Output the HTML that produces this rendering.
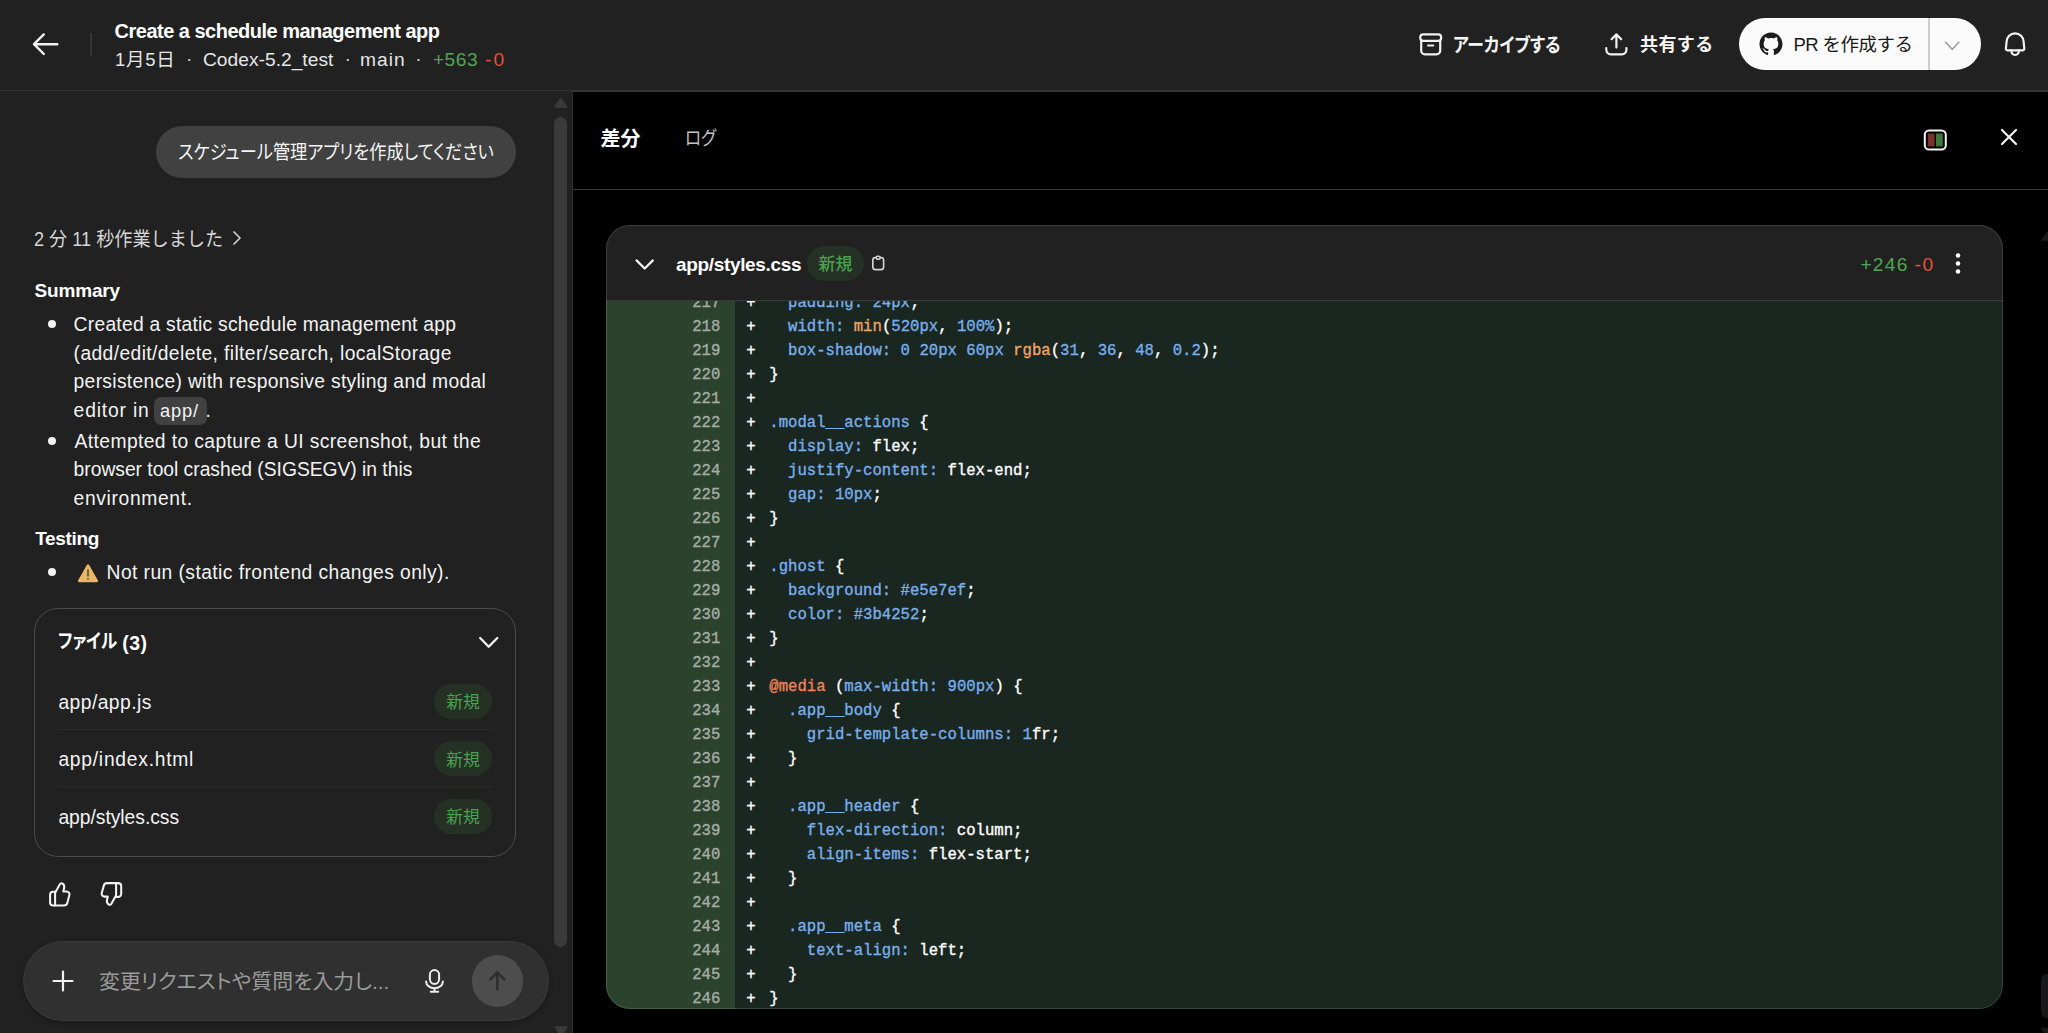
<!DOCTYPE html>
<html lang="ja">
<head>
<meta charset="utf-8">
<title>Create a schedule management app</title>
<style>
*{box-sizing:border-box;margin:0;padding:0}
html,body{width:2048px;height:1033px;overflow:hidden;background:#212121}
body{position:relative;font-family:"Liberation Sans","Noto Sans CJK JP",sans-serif;color:#fff;font-size:19px;-webkit-font-smoothing:antialiased}
.abs{position:absolute}
svg{display:block;overflow:visible}
.t{position:absolute;white-space:nowrap;line-height:1}
.b{font-weight:700}
.green{color:#4fa653}
.red{color:#e2533a}

/* header */
#hdr{position:absolute;left:0;top:0;width:2048px;height:92px;background:#212121;border-bottom:2px solid #343434}
#sep{position:absolute;left:90px;top:33px;width:2px;height:23px;background:#363636}

/* left panel */
#left{position:absolute;left:0;top:91px;width:572px;height:942px;background:#212121}
#vline{position:absolute;left:571.600px;top:92px;width:1.400px;height:941px;background:#2c2c2c}
#bubble{position:absolute;left:156px;top:126px;width:360px;height:52px;border-radius:26px;background:#414141}
.li{position:absolute;white-space:nowrap;line-height:1;font-size:19.3px;color:#f3f3f3}
.dot{position:absolute;left:47.600px;width:8px;height:8px;border-radius:50%;background:#f3f3f3}
#files{position:absolute;left:34px;top:608px;width:482px;height:249px;border:1px solid #4b4b4b;border-radius:24px}
.frow{position:absolute;font-size:19.3px;white-space:nowrap;line-height:1;color:#f3f3f3}
.fsep{position:absolute;left:58px;width:434px;height:1px;background:#2c2c2c}
.badge{position:absolute;width:57.500px;height:35px;border-radius:17.500px;background:#263126;color:#49a24e;font-size:16.800px;font-weight:400;line-height:35px;padding-top:1.800px;text-align:center}
#inp{position:absolute;left:23px;top:941px;width:526px;height:80px;border-radius:40px;background:#303030;box-shadow:0 2px 5px rgba(0,0,0,.22),inset 0 0 0 1px rgba(255,255,255,.05)}
#send{position:absolute;left:471.600px;top:954.900px;width:51.600px;height:51.800px;border-radius:50%;background:#4d4d4d}
#sbLt{position:absolute;left:554.400px;top:117px;width:12.900px;height:829.500px;border-radius:6.450px;background:#3a3a3a}

/* right panel */
#right{position:absolute;left:573px;top:92px;width:1475px;height:941px;background:#000}
#tabline{position:absolute;left:573px;top:189px;width:1475px;height:1px;background:#373737}
#card{position:absolute;left:606px;top:225px;width:1397px;height:784px;border-radius:24px;overflow:hidden;background:#1a2620}
#cardb{position:absolute;left:606px;top:225px;width:1397px;height:784px;border-radius:24px;border:1px solid rgba(255,255,255,.13);pointer-events:none}
#chead{position:absolute;left:0;top:0;width:1397px;height:76px;background:#212121;border-bottom:1px solid #3a3a3a}
#gutter{position:absolute;left:0;top:76px;width:128.600px;height:710px;background:#2b432d}
#code{position:absolute;left:1px;top:76px;width:1395px;height:710px;overflow:hidden;font-family:"Liberation Mono",monospace;font-size:15.630px;-webkit-text-stroke-width:0.350px}
.ln{position:absolute;left:0;width:113.300px;text-align:right;color:#a5ada6;height:24px;line-height:24px;white-space:pre}
.pl{position:absolute;left:139.300px;height:24px;line-height:24px;color:#fff;white-space:pre}
.cl{position:absolute;left:162.300px;height:24px;line-height:24px;color:#fff;white-space:pre}
.p{color:#78afec}
.f{color:#f0a565}
.k{color:#ee8159}
</style>
</head>
<body>
<div id="hdr"></div>
<div id="left"></div>
<div id="vline"></div>
<div id="right"></div>
<div id="tabline"></div>
<!--HEADER-->
<svg class="abs" id="ic-back" style="left:32px;top:32px" width="28" height="24" viewBox="0 0 28 24" fill="none" stroke="#f2f2f2" stroke-width="2.400" stroke-linecap="round" stroke-linejoin="round"><path d="M25.300 12.200H2M11.800 2.400L2 12.200l9.800 9.800"/></svg>
<div id="sep"></div>
<div class="t b" id="title" style="left:114.6px;top:20.7px;font-size:20px;color:#fff;letter-spacing:-0.510px">Create a schedule management app</div>
<div class="t" id="s1" style="left:115.0px;top:51.4px;font-size:18.5px;color:#e6e6e6;letter-spacing:0.733px">1月5日</div>
<div class="t" id="s2" style="left:203.0px;top:50.4px;font-size:19.2px;color:#e6e6e6;letter-spacing:0.015px">Codex-5.2_test</div>
<div class="t" id="s3" style="left:360.0px;top:50.4px;font-size:19.2px;color:#e6e6e6;letter-spacing:1.000px">main</div>
<div class="t green" id="s4" style="left:432.9px;top:50.4px;font-size:19.2px;letter-spacing:0.500px">+563</div>
<div class="t red" id="s5" style="left:485.0px;top:50.4px;font-size:19.2px;letter-spacing:2.200px">-0</div>
<div class="t" id="d1" style="left:186px;top:49px;font-size:19.2px;color:#d0d0d0">·</div>
<div class="t" id="d2" style="left:344.5px;top:49px;font-size:19.2px;color:#d0d0d0">·</div>
<div class="t" id="d3" style="left:415.3px;top:49px;font-size:19.2px;color:#d0d0d0">·</div>

<svg class="abs" id="ic-arch" style="left:1419px;top:33px" width="24" height="24" viewBox="0 0 24 24" fill="none" stroke="#f2f2f2" stroke-width="2.200" stroke-linecap="round" stroke-linejoin="round"><rect x="1.300" y="1.300" width="20.800" height="6.600" rx="2.800"/><path d="M2.200 7.900v9.600a3.800 3.800 0 0 0 3.800 3.800h11.400a3.800 3.800 0 0 0 3.800-3.800V7.900"/><path d="M9.100 12.500h5.100"/></svg>
<div class="t b" id="arch" style="left:1453.2px;top:35.5px;font-size:19.5px;color:#f4f4f4;font-feature-settings:'palt';transform:scaleX(0.8614);transform-origin:0 0">アーカイブする</div>
<svg class="abs" id="ic-share" style="left:1605px;top:32px" width="24" height="25" viewBox="0 0 24 25" fill="none" stroke="#f2f2f2" stroke-width="2.200" stroke-linecap="round" stroke-linejoin="round"><path d="M11.400 15.500V2.400M6.600 7.200l4.800-4.800 4.800 4.800"/><path d="M1.300 16v1.800a4.500 4.500 0 0 0 4.500 4.500h11.100a4.500 4.500 0 0 0 4.500-4.500V16"/></svg>
<div class="t b" id="share" style="left:1640.0px;top:36.0px;font-size:18px;color:#f4f4f4;letter-spacing:0.400px">共有する</div>

<div class="abs" id="prbtn" style="left:1739px;top:18px;width:242px;height:52px;border-radius:26px;background:#fafafa"></div>
<div class="abs" style="left:1928.300px;top:18px;width:1.300px;height:52px;background:#cdcdcd"></div>
<svg class="abs" id="ic-gh" style="left:1759px;top:32px" width="24" height="24" viewBox="0 0 24 24"><path fill="#1c1c1c" d="M12 .5C5.65.5.5 5.65.5 12c0 5.080 3.290 9.390 7.860 10.910.570.110.790-.250.790-.550 0-.270-.010-1.170-.020-2.120-3.200.700-3.870-1.360-3.870-1.360-.520-1.330-1.280-1.680-1.280-1.680-1.040-.710.080-.700.080-.700 1.150.080 1.760 1.190 1.760 1.190 1.030 1.760 2.690 1.250 3.350.950.100-.740.400-1.250.730-1.540-2.550-.290-5.240-1.280-5.240-5.680 0-1.260.450-2.280 1.180-3.090-.120-.290-.510-1.460.110-3.040 0 0 .960-.310 3.160 1.180A10.980 10.980 0 0 1 12 6.060c.980 0 1.960.130 2.880.390 2.190-1.490 3.160-1.180 3.160-1.180.630 1.580.230 2.750.110 3.040.740.810 1.180 1.830 1.180 3.090 0 4.420-2.690 5.390-5.250 5.670.410.360.780 1.060.780 2.140 0 1.540-.010 2.790-.010 3.170 0 .310.210.670.800.550C20.210 21.390 23.500 17.080 23.500 12 23.500 5.650 18.350.5 12 .5z"/></svg>
<div class="t" id="prtxt" style="left:1793.4px;top:36.0px;font-size:18.5px;color:#1a1a1a;letter-spacing:-0.541px">PR を作成する</div>
<svg class="abs" id="ic-prchev" style="left:1943px;top:40px" width="18" height="12" viewBox="0 0 18 12" fill="none" stroke="#9c9c9c" stroke-width="1.650" stroke-linecap="round" stroke-linejoin="round"><path d="M2.600 2.300l6.600 7 6.600-7"/></svg>
<svg class="abs" id="ic-bell" style="left:2003px;top:31px" width="25" height="27" viewBox="0 0 25 27" fill="none" stroke="#f2f2f2" stroke-width="2.200" stroke-linecap="round" stroke-linejoin="round"><path d="M12.100 2.300C7.200 2.300 3.900 6 3.600 10.500L2.900 17.500C2.800 18.500 3.500 19.300 4.500 19.300H19.700C20.700 19.300 21.400 18.500 21.300 17.500L20.600 10.500C20.300 6 17 2.300 12.100 2.300Z"/><path d="M8.200 19.300C8.400 22.300 10 24 12.100 24C14.200 24 15.800 22.300 16 19.300"/></svg>
<!--LEFT-->
<div id="sbLt"></div>
<svg class="abs" style="left:554px;top:97px" width="14" height="11" viewBox="0 0 14 11"><path d="M6.950 1.800L12.500 9.700H1.400z" fill="#3a3a3a" stroke="#3a3a3a" stroke-width="2" stroke-linejoin="round"/></svg>
<svg class="abs" style="left:554px;top:1025px" width="14" height="8" viewBox="0 0 14 8"><path d="M1.400 2.300H12.500L6.950 10.200z" fill="#3a3a3a" stroke="#3a3a3a" stroke-width="2" stroke-linejoin="round"/></svg>

<div id="bubble"></div>
<div class="t" id="btxt" style="left:177.6px;top:142.8px;font-size:19.5px;color:#f4f4f4;font-feature-settings:'palt';transform:scaleX(0.8832);transform-origin:0 0">スケジュール管理アプリを作成してください</div>

<div class="t" id="worked" style="left:33.8px;top:229.6px;font-size:19.800px;color:#d6d6d6;transform:scaleX(0.9168);transform-origin:0 0">2 分 11 秒作業しました</div>
<svg class="abs" style="left:232px;top:230px" width="10" height="16" viewBox="0 0 10 16" fill="none" stroke="#cfcfcf" stroke-width="1.700" stroke-linecap="round" stroke-linejoin="round"><path d="M2 2l6 6-6 6"/></svg>

<div class="t b" id="h-sum" style="left:34.4px;top:280.8px;font-size:19px;letter-spacing:-0.134px">Summary</div>
<div class="dot" style="top:320.300px"></div>
<div class="li" id="l1" style="left:73.6px;top:315.4px;letter-spacing:0.240px">Created a static schedule management app</div>
<div class="li" id="l2" style="left:73.6px;top:343.8px;letter-spacing:0.378px">(add/edit/delete, filter/search, localStorage</div>
<div class="li" id="l3" style="left:73.6px;top:372.3px;letter-spacing:0.301px">persistence) with responsive styling and modal</div>
<div class="li" id="l4" style="left:73.6px;top:400.7px;letter-spacing:0.822px">editor in</div>
<div class="abs" id="codechip" style="left:154px;top:396.700px;width:52.700px;height:28.100px;border-radius:7px;background:#414141"></div>
<div class="t" id="chiptxt" style="left:160.0px;top:402.0px;font-size:18.300px;color:#f3f3f3;letter-spacing:0.833px">app/</div>
<div class="li" id="l4b" style="left:205.4px;top:400.7px">.</div>
<div class="dot" style="top:436.800px"></div>
<div class="li" id="l5" style="left:74.6px;top:431.9px;letter-spacing:0.386px">Attempted to capture a UI screenshot, but the</div>
<div class="li" id="l6" style="left:73.6px;top:460.3px;letter-spacing:-0.027px">browser tool crashed (SIGSEGV) in this</div>
<div class="li" id="l7" style="left:73.6px;top:488.8px;letter-spacing:0.636px">environment.</div>

<div class="t b" id="h-test" style="left:35.2px;top:528.9px;font-size:19px;letter-spacing:-0.333px">Testing</div>
<div class="dot" style="top:568.100px"></div>
<svg class="abs" id="ic-warn" style="left:77px;top:563px" width="22" height="20" viewBox="0 0 22 20"><path d="M11 1.200c.500 0 .900.250 1.150.700l8.700 15.400c.500.900-.100 2-1.150 2H2.300c-1.050 0-1.650-1.100-1.150-2L9.850 1.900c.250-.450.650-.700 1.150-.700z" fill="#ecb663"/><path d="M11 6.500v7" stroke="#5c6150" stroke-width="1.900" stroke-linecap="butt"/><circle cx="11" cy="15.900" r="1.050" fill="#6a6a58"/></svg>
<div class="li" id="l8" style="left:106.6px;top:563.4px;letter-spacing:0.417px">Not run (static frontend changes only).</div>

<div id="files"></div>
<div class="t b" id="h-files" style="left:57.5px;top:632.0px;font-size:19.5px;font-feature-settings:'palt';transform:scaleX(0.85);transform-origin:0 0">ファイル</div>
<div class="t b" id="h-files2" style="left:122.2px;top:634.1px;font-size:19.5px;letter-spacing:0.525px">(3)</div>
<svg class="abs" style="left:479px;top:636px" width="19" height="12" viewBox="0 0 19 12" fill="none" stroke="#f2f2f2" stroke-width="2.300" stroke-linecap="round" stroke-linejoin="round"><path d="M1.200 2L9.700 10.700L18.300 2"/></svg>
<div class="frow" id="f1" style="left:58.4px;top:692.5px;letter-spacing:0.444px">app/app.js</div>
<div class="badge" style="left:434.300px;top:683.700px">新規</div>
<div class="fsep" style="top:729px"></div>
<div class="frow" id="f2" style="left:58.4px;top:750.0px;letter-spacing:0.738px">app/index.html</div>
<div class="badge" style="left:434.300px;top:741.200px">新規</div>
<div class="fsep" style="top:786px"></div>
<div class="frow" id="f3" style="left:58.4px;top:807.5px;letter-spacing:-0.031px">app/styles.css</div>
<div class="badge" style="left:434.300px;top:798.700px">新規</div>

<svg class="abs" id="ic-up" style="left:48px;top:881px" width="25" height="27" viewBox="0 0 25 27" fill="none" stroke="#f2f2f2" stroke-width="2.050" stroke-linecap="round" stroke-linejoin="round"><path d="M7.100 10.700H5.100a3 3 0 0 0-3 3v7.800a3 3 0 0 0 3 3h2.000z"/><path d="M7.100 11.800L11.700 3.400C12.300 2.300 13.600 2 14.600 2.700C16 3.700 16.500 5.300 16.100 7L15.300 10.500H18.600C20.500 10.500 21.900 12.300 21.400 14.100L19.300 21.900C18.900 23.400 17.600 24.400 16 24.400H7.100"/></svg>
<svg class="abs" id="ic-down" style="left:99px;top:881px" width="25" height="27" viewBox="0 0 25 27" fill="none" stroke="#f2f2f2" stroke-width="2.050" stroke-linecap="round" stroke-linejoin="round"><path d="M17.100 2.100h2.100a3 3 0 0 1 3 3v7.800a3 3 0 0 1-3 3h-2.100z"/><path d="M17.100 14.300L12.400 22.700C11.800 23.800 10.500 24.100 9.500 23.400C8.100 22.400 7.600 20.800 8 19.100L8.800 15.600H5.500C3.600 15.600 2.200 13.800 2.700 12L4.800 4.600C5.200 3.100 6.500 2.100 8.100 2.100H17.100"/></svg>

<div id="inp"></div>
<svg class="abs" style="left:52px;top:970px" width="22" height="22" viewBox="0 0 22 22" fill="none" stroke="#f2f2f2" stroke-width="2.200" stroke-linecap="round"><path d="M11 1.500v19M1.500 11h19"/></svg>
<div class="t" id="ph" style="left:99.0px;top:972.0px;font-size:20.5px;color:#9b9b9b;font-feature-settings:'palt';transform:scaleX(1.0200);transform-origin:0 0">変更リクエストや質問を入力し...</div>
<svg class="abs" id="ic-mic" style="left:424px;top:967px" width="22" height="27" viewBox="0 0 22 27" fill="none" stroke="#ededed" stroke-width="2" stroke-linecap="round" stroke-linejoin="round"><rect x="5.900" y="3" width="9.200" height="13.900" rx="4.600"/><path d="M2.100 14.600C2.100 18.300 5.900 21.300 10.500 21.300C15.100 21.300 18.900 18.300 18.900 14.600M10.500 21.300V24.800M6.800 24.800H14.200"/></svg>
<div id="send"></div>
<svg class="abs" id="ic-send" style="left:487px;top:969px" width="21" height="24" viewBox="0 0 21 24" fill="none" stroke="#2e2e2e" stroke-width="2.400" stroke-linecap="round" stroke-linejoin="round"><path d="M10.300 20.200V3.300M3 10.600l7.300-7.300 7.300 7.300"/></svg>
<!--RIGHT-->
<div class="t b" id="tab1" style="left:600.4px;top:128.7px;font-size:20px;color:#fff;letter-spacing:0.000px">差分</div>
<div class="t" id="tab2" style="left:685.2px;top:128.5px;font-size:19.5px;color:#c4c4c4;font-feature-settings:'palt';transform:scaleX(0.85);transform-origin:0 0">ログ</div>
<svg class="abs" id="ic-split" style="left:1923px;top:128px" width="25" height="24" viewBox="0 0 25 24"><rect x="1.800" y="2.500" width="21" height="19" rx="4.200" fill="none" stroke="#f4f4f4" stroke-width="2"/><rect x="4.800" y="5.600" width="6.800" height="12.800" fill="#7a3129"/><rect x="13" y="5.600" width="6.700" height="12.800" fill="#3b7a3b"/></svg>
<svg class="abs" id="ic-x" style="left:2000px;top:128px" width="18" height="18" viewBox="0 0 18 18" fill="none" stroke="#f4f4f4" stroke-width="2.200" stroke-linecap="round"><path d="M2 2l14 14M16 2L2 16"/></svg>

<div id="card">
<div id="gutter"></div>
<div id="code">
<div class="ln" style="top:-10px">217</div><div class="pl" style="top:-10px">+</div><div class="cl" style="top:-10px">  <span class="p">padding</span><span class="p">:</span> <span class="p">24px</span>;</div>
<div class="ln" style="top:14px">218</div><div class="pl" style="top:14px">+</div><div class="cl" style="top:14px">  <span class="p">width</span><span class="p">:</span> <span class="f">min</span>(<span class="p">520px</span>, <span class="p">100%</span>);</div>
<div class="ln" style="top:38px">219</div><div class="pl" style="top:38px">+</div><div class="cl" style="top:38px">  <span class="p">box-shadow</span><span class="p">:</span> <span class="p">0</span> <span class="p">20px</span> <span class="p">60px</span> <span class="f">rgba</span>(<span class="p">31</span>, <span class="p">36</span>, <span class="p">48</span>, <span class="p">0.2</span>);</div>
<div class="ln" style="top:62px">220</div><div class="pl" style="top:62px">+</div><div class="cl" style="top:62px">}</div>
<div class="ln" style="top:86px">221</div><div class="pl" style="top:86px">+</div><div class="cl" style="top:86px"></div>
<div class="ln" style="top:110px">222</div><div class="pl" style="top:110px">+</div><div class="cl" style="top:110px"><span class="p">.modal__actions</span> {</div>
<div class="ln" style="top:134px">223</div><div class="pl" style="top:134px">+</div><div class="cl" style="top:134px">  <span class="p">display</span><span class="p">:</span> flex;</div>
<div class="ln" style="top:158px">224</div><div class="pl" style="top:158px">+</div><div class="cl" style="top:158px">  <span class="p">justify-content</span><span class="p">:</span> flex-end;</div>
<div class="ln" style="top:182px">225</div><div class="pl" style="top:182px">+</div><div class="cl" style="top:182px">  <span class="p">gap</span><span class="p">:</span> <span class="p">10px</span>;</div>
<div class="ln" style="top:206px">226</div><div class="pl" style="top:206px">+</div><div class="cl" style="top:206px">}</div>
<div class="ln" style="top:230px">227</div><div class="pl" style="top:230px">+</div><div class="cl" style="top:230px"></div>
<div class="ln" style="top:254px">228</div><div class="pl" style="top:254px">+</div><div class="cl" style="top:254px"><span class="p">.ghost</span> {</div>
<div class="ln" style="top:278px">229</div><div class="pl" style="top:278px">+</div><div class="cl" style="top:278px">  <span class="p">background</span><span class="p">:</span> <span class="p">#e5e7ef</span>;</div>
<div class="ln" style="top:302px">230</div><div class="pl" style="top:302px">+</div><div class="cl" style="top:302px">  <span class="p">color</span><span class="p">:</span> <span class="p">#3b4252</span>;</div>
<div class="ln" style="top:326px">231</div><div class="pl" style="top:326px">+</div><div class="cl" style="top:326px">}</div>
<div class="ln" style="top:350px">232</div><div class="pl" style="top:350px">+</div><div class="cl" style="top:350px"></div>
<div class="ln" style="top:374px">233</div><div class="pl" style="top:374px">+</div><div class="cl" style="top:374px"><span class="k">@media</span> (<span class="p">max-width</span><span class="p">:</span> <span class="p">900px</span>) {</div>
<div class="ln" style="top:398px">234</div><div class="pl" style="top:398px">+</div><div class="cl" style="top:398px">  <span class="p">.app__body</span> {</div>
<div class="ln" style="top:422px">235</div><div class="pl" style="top:422px">+</div><div class="cl" style="top:422px">    <span class="p">grid-template-columns</span><span class="p">:</span> <span class="p">1</span>fr;</div>
<div class="ln" style="top:446px">236</div><div class="pl" style="top:446px">+</div><div class="cl" style="top:446px">  }</div>
<div class="ln" style="top:470px">237</div><div class="pl" style="top:470px">+</div><div class="cl" style="top:470px"></div>
<div class="ln" style="top:494px">238</div><div class="pl" style="top:494px">+</div><div class="cl" style="top:494px">  <span class="p">.app__header</span> {</div>
<div class="ln" style="top:518px">239</div><div class="pl" style="top:518px">+</div><div class="cl" style="top:518px">    <span class="p">flex-direction</span><span class="p">:</span> column;</div>
<div class="ln" style="top:542px">240</div><div class="pl" style="top:542px">+</div><div class="cl" style="top:542px">    <span class="p">align-items</span><span class="p">:</span> flex-start;</div>
<div class="ln" style="top:566px">241</div><div class="pl" style="top:566px">+</div><div class="cl" style="top:566px">  }</div>
<div class="ln" style="top:590px">242</div><div class="pl" style="top:590px">+</div><div class="cl" style="top:590px"></div>
<div class="ln" style="top:614px">243</div><div class="pl" style="top:614px">+</div><div class="cl" style="top:614px">  <span class="p">.app__meta</span> {</div>
<div class="ln" style="top:638px">244</div><div class="pl" style="top:638px">+</div><div class="cl" style="top:638px">    <span class="p">text-align</span><span class="p">:</span> left;</div>
<div class="ln" style="top:662px">245</div><div class="pl" style="top:662px">+</div><div class="cl" style="top:662px">  }</div>
<div class="ln" style="top:686px">246</div><div class="pl" style="top:686px">+</div><div class="cl" style="top:686px">}</div>

</div>
<div id="chead"></div>
</div>
<div id="cardb"></div>
<svg class="abs" style="left:635px;top:258px" width="20" height="13" viewBox="0 0 20 13" fill="none" stroke="#f4f4f4" stroke-width="2.200" stroke-linecap="round" stroke-linejoin="round"><path d="M1.500 2.400L9.700 10.500L17.900 2.400"/></svg>
<div class="t b" id="fname" style="left:676.0px;top:254.6px;font-size:19px;color:#fff;letter-spacing:-0.338px">app/styles.css</div>
<div class="badge" id="bdg" style="left:806.900px;top:245.500px;width:57px;font-weight:500;background:#243124">新規</div>
<svg class="abs" id="ic-copy" style="left:871px;top:255px" width="14" height="16" viewBox="0 0 14 16" fill="none" stroke="#d6d6d6" stroke-width="1.600" stroke-linejoin="round"><rect x="1.800" y="2.500" width="10.800" height="12.100" rx="2.600"/><rect x="5.200" y="1.200" width="4" height="3" rx="1.400" fill="#212121"/></svg>
<div class="t green" id="statg" style="left:1860.4px;top:254.8px;font-size:19.2px;letter-spacing:1.267px">+246</div>
<div class="t red" id="statr" style="left:1914.6px;top:254.8px;font-size:19.2px;letter-spacing:1.400px">-0</div>
<svg class="abs" style="left:1954.900px;top:252px" width="6" height="24" viewBox="0 0 6 24"><circle cx="3" cy="3.500" r="2.300" fill="#fff"/><circle cx="3" cy="11.500" r="2.300" fill="#fff"/><circle cx="3" cy="19.500" r="2.300" fill="#fff"/></svg>

<svg class="abs" style="left:2040px;top:230px" width="8" height="12" viewBox="0 0 8 12"><path d="M7.500 2.500L13.200 10H1.800z" fill="#18191b" stroke="#18191b" stroke-width="1.600" stroke-linejoin="round"/></svg>
<div class="abs" style="left:2041px;top:973.500px;width:14px;height:44px;border-radius:6px;background:#17181a"></div>
<svg class="abs" style="left:2040px;top:1026px" width="8" height="7" viewBox="0 0 8 7"><path d="M1.800 2.500H13.200L7.500 10z" fill="#18191b" stroke="#18191b" stroke-width="1.600" stroke-linejoin="round"/></svg>

</body>
</html>
